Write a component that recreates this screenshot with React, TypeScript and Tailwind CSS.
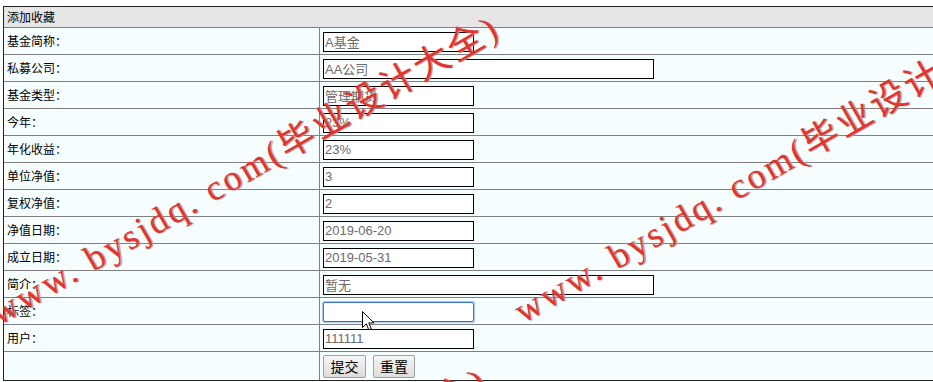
import React from 'react';

type Field = { label: string; value?: string; wide?: boolean; focused?: boolean };

const fields: Field[] = [
  { label: '基金简称：', value: 'A基金' },
  { label: '私募公司：', value: 'AA公司', wide: true },
  { label: '基金类型：', value: '管理期货' },
  { label: '今年：', value: '23%' },
  { label: '年化收益：', value: '23%' },
  { label: '单位净值：', value: '3' },
  { label: '复权净值：', value: '2' },
  { label: '净值日期：', value: '2019-06-20' },
  { label: '成立日期：', value: '2019-05-31' },
  { label: '简介：', value: '暂无', wide: true },
  { label: '标签：', value: '', focused: true },
  { label: '用户：', value: '111111' },
];

const cjk = "font-['SimSun','Noto_Sans_CJK_SC',sans-serif]";

const Watermark = ({ className }: { className: string }) => (
  <span
    className={`pointer-events-none absolute origin-top-left -rotate-[30deg] whitespace-nowrap text-[36px] leading-none tracking-[3px] text-[#e3342f] [text-shadow:1px_1px_1px_#9a9a9a] font-['Liberation_Serif','Noto_Sans_CJK_SC',serif] ${className}`}
  >
    www. bysjdq. com(毕业设计大全)
  </span>
);

const App = () => {
  return (
    <div className={`relative h-[382px] w-[933px] overflow-hidden bg-white text-[12px] text-black ${cjk}`}>
      <div className="ml-[3px] mt-[6px] w-[960px] border border-[#222] bg-[#f5fdff]">
        <div className="flex h-[21px] items-center border-b border-[#808080] bg-[#e6e6e6] px-[3px]">
          添加收藏
        </div>
        {fields.map((f) => (
          <div key={f.label} className="flex h-[27px] border-b border-[#808080]">
            <div className="flex w-[316px] items-center border-r border-[#808080] pl-[3px]">
              {f.label}
            </div>
            <div className="flex items-center pl-[3px] pt-[1px]">
              <input
                readOnly
                defaultValue={f.value}
                className={`h-[20px] px-[1px] text-[13px] text-[#6b6b6b] outline-none font-['Liberation_Sans','Noto_Sans_CJK_SC',sans-serif] ${
                  f.wide ? 'w-[331px]' : 'w-[151px]'
                } ${
                  f.focused
                    ? 'rounded-[2px] border border-[#3b72c6] bg-white shadow-[0_0_1px_1px_#a9c6ee]'
                    : 'border border-black bg-white'
                }`}
              />
            </div>
          </div>
        ))}
        <div className="flex h-[28px]">
          <div className="w-[316px] border-r border-[#808080]" />
          <div className="flex items-center gap-[7px] pl-[3px] pt-[1px]">
            <button className="h-[23px] w-[43px] rounded-[2px] border border-[#a0a0a0] bg-gradient-to-b from-[#f6f6f6] to-[#dddddd] text-[14px]">
              提交
            </button>
            <button className="h-[23px] w-[42px] rounded-[2px] border border-[#a0a0a0] bg-gradient-to-b from-[#f6f6f6] to-[#dddddd] text-[14px]">
              重置
            </button>
          </div>
        </div>
      </div>

      <Watermark className="left-[-16px] top-[300px]" />
      <Watermark className="left-[508px] top-[298px]" />
      <Watermark className="left-[-28px] top-[652px]" />

      <svg className="pointer-events-none absolute left-[362px] top-[311px]" width="13" height="21" viewBox="0 0 13 21">
        <path d="M0.5 0.5 L0.5 16.5 L4.3 12.8 L6.8 18.8 L9.3 17.7 L6.8 11.9 L12 11.9 Z" fill="#fff" stroke="#000" strokeWidth="1" strokeLinejoin="round" />
      </svg>
    </div>
  );
};

export default App;
